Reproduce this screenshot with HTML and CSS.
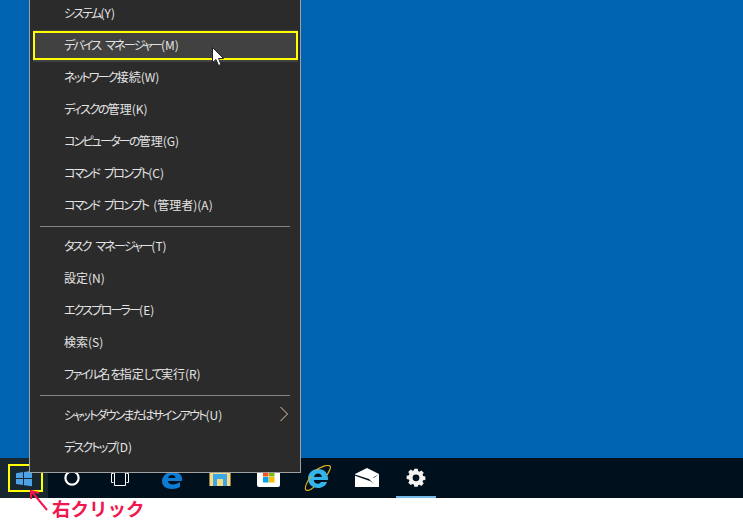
FILE: index.html
```html
<!DOCTYPE html>
<html lang="ja">
<head>
    <meta charset="utf-8">
    <title>デバイス マネージャー</title>
    <link rel="stylesheet" href="styles.css">
</head>
<body>
    <div class="desktop"></div>

    <div class="taskbar">
        <div class="cell start">
            <svg width="18" height="17" viewBox="0 0 18 17"><path fill="#4ba3e6" d="M1 3.200 8 2.100v6H1zM9 2 17 .8v7.300H9zM1 9h7v6.100L1 14zM9 9h8v7.300L9 15.200z"/></svg>
        </div>
        <div class="cell">
            <svg width="18" height="18" viewBox="0 0 18 18"><circle cx="9" cy="9" r="6.600" fill="none" stroke="#fff" stroke-width="2.200"/></svg>
        </div>
        <div class="cell">
            <svg width="22" height="20" viewBox="0 0 22 20"><path fill="none" stroke="#fff" d="M5.500 2.500h11v15h-11zM2.500 5.500v9h2M2.500 5.500h2M19.500 5.500v9h-2M19.500 5.500h-2"/></svg>
        </div>
        <div class="cell edge">
            <svg width="24" height="24" viewBox="0 0 24 24"><path fill="#0f7cd4" d="M12 6C6 6 2 11 2 15c0 5 4 8 10 8 3 0 6-1 8-2v-5c-2 1.500-4.500 2.500-7 2.500-3 0-5-1.500-5-3.500h14c1-6-3-9-10-9zm-4 6c.5-2 2-3 4-3s3.500 1 3.500 3z"/></svg>
        </div>
        <div class="cell">
            <svg width="24" height="20" viewBox="0 0 24 20"><rect x="1" y="0" width="22" height="18" fill="#f9d97f"/><path fill="#8d7a48" d="M1 0h1v18H1zM22 0h1v18h-1z"/><path fill="#3ba7e6" d="M5 18V6h14v12h-4v-7H9v7z"/><rect x="9" y="11" width="6" height="7" fill="#f9d97f"/></svg>
        </div>
        <div class="cell">
            <svg width="24" height="20" viewBox="0 0 24 20"><rect x="1" y="1" width="23" height="18" rx="2" fill="#fff"/><path fill="#f25022" d="M7 3h5.500v5.500H7z"/><path fill="#7fba00" d="M13 3h5.500v5.500H13z"/><path fill="#00a4ef" d="M7 9h5.500v5.500H7z"/><path fill="#ffb900" d="M13 9h5.500v5.500H13z"/></svg>
        </div>
        <div class="cell ie">
            <svg width="28" height="26" viewBox="0 0 28 26"><path fill="#35b4ea" d="M14 4C8 4 4 8.500 4 13.500S8 23 14 23c4.500 0 8-2.500 9-6h-6c-.8 1.200-1.800 1.800-3.200 1.800-2.300 0-3.800-1.500-4-3.800H24c.6-6.500-3.500-11-10-11zm-4 8c.3-2.200 1.900-3.500 4-3.500s3.700 1.300 3.900 3.500z"/><path fill="none" stroke="#d9a91f" stroke-width="1.300" d="M7 11C3 17 0 23 2 25c1.500 1.200 5-.5 8-3M12 5c6-3.500 12-5.500 14-4 1.300 1.300-.5 5-3 9"/></svg>
        </div>
        <div class="cell mail">
            <svg width="24" height="20" viewBox="0 0 24 20"><path fill="#fff" d="M0 6 12 0l12 6v13H0z"/><path fill="#00101c" d="M0 6.500 14 11l5 5-3.500-2.800L0 7.800zM24 6.300 19 9.800l-1-.4z"/></svg>
        </div>
        <div class="cell active">
            <svg width="20" height="20" viewBox="0 0 20 20"><path fill="#f2f2f2" fill-rule="evenodd" d="M8 1h4l.5 2.600 1.500.7 2.300-1.400 2.800 2.800-1.400 2.300.7 1.500 2.600.5v4l-2.600.5-.7 1.500 1.400 2.300-2.800 2.800-2.300-1.400-1.500.7L12 22H8l-.5-2.600-1.500-.7-2.300 1.400-2.800-2.800 1.400-2.300-.7-1.500L-1 13V9l2.600-.5.7-1.500-1.400-2.300 2.800-2.800L6 3.300l1.500-.7zM10 7.500a4 4 0 1 0 0 8 4 4 0 0 0 0-8z" transform="translate(1.500 1) scale(.85)"/></svg>
        </div>
    </div>

    <div class="note">右クリック</div>

    <!-- context menu, grows upward from the taskbar -->
    <div class="menu">
        <div class="item"><span>システム<i>(Y)</i></span></div>
        <div class="item hover"><span>デバイス マネージャー<i>(M)</i></span></div>
        <div class="item"><span>ネットワーク<i>接続(W)</i></span></div>
        <div class="item"><span>ディスクの<i>管理(K)</i></span></div>
        <div class="item"><span>コンピューターの<i>管理(G)</i></span></div>
        <div class="item"><span>コマンド プロンプト<i>(C)</i></span></div>
        <div class="item"><span>コマンド プロンプト <i>(管理者)(A)</i></span></div>
        <div class="sep"></div>
        <div class="item"><span>タスク マネージャー<i>(T)</i></span></div>
        <div class="item"><span><i>設定(N)</i></span></div>
        <div class="item"><span>エクスプローラー<i>(E)</i></span></div>
        <div class="item"><span><i>検索(S)</i></span></div>
        <div class="item"><span>ファイル<i>名</i>を<i>指定</i>して<i>実行(R)</i></span></div>
        <div class="sep"></div>
        <div class="item sub"><span>シャットダウンまたはサインアウト<i>(U)</i></span>
            <svg width="10" height="16" viewBox="0 0 10 16"><path fill="none" stroke="#e6c9a8" d="M1.500 1 8.500 8l-7 7"/></svg>
        </div>
        <div class="item"><span>デスクトップ<i>(D)</i></span></div>
    </div>

    <div class="start-mark"></div>

    <svg class="pointer" width="14" height="20" viewBox="0 0 14 20"><path fill="#fff" stroke="#222" d="M.5.500v15l3.500-3 2.500 6 2.500-1-2.500-6h5z"/></svg>

    <svg class="arrow" width="22" height="24" viewBox="0 0 22 24"><path fill="none" stroke="#f0174f" stroke-width="2" d="M18 21 3 3M2 10 2 2l8 2"/></svg>
</body>
</html>
```
FILE: styles.css
```css
html, body {
    margin: 0;
    height: 520px;
    overflow: hidden;
}
body {
    position: relative;
    display: flex;
    flex-direction: column;
    background: white;
    font-family: "Noto Sans CJK JP", "Noto Sans", sans-serif;
}
.desktop {
    height: 458px;
    flex: none;
    background: #0063b1;
}
.taskbar {
    display: flex;
    flex: none;
    height: 40px;
    background: #00101c;
}
.cell {
    display: flex;
    align-items: center;
    justify-content: center;
    width: 48px;
}
.start {
    background: #17262f;
}
.edge {
    margin-left: 4px;
}
.ie {
    margin-left: 2px;
}
.mail {
    margin-left: 1px;
}
.active {
    box-sizing: border-box;
    width: 40px;
    margin: 0 4px 0 5px;
    border-bottom: 2px solid #76b9ed;
}
.note {
    box-sizing: border-box;
    height: 22px;
    padding: 2px 0 0 52px;
    font-family: "Liberation Sans", "Noto Sans CJK JP", sans-serif;
    font-size: 18.500px;
    font-weight: 700;
    line-height: 20px;
    color: #f0174f;
}

.menu {
    position: absolute;
    z-index: 1;
    left: 29px;
    bottom: 47px;
    box-sizing: border-box;
    width: 272px;
    padding-bottom: 8px;
    border: 1px solid #a0a0a0;
    background: #2b2b2b;
    color: #e4e4e4;
    font-size: 12px;
    font-feature-settings: "palt";
    letter-spacing: -1.800px;
    word-spacing: 4px;
}
/* kanji and the access keys keep their normal spacing */
.menu i {
    font-style: normal;
    letter-spacing: 0;
}
.item {
    position: relative;
    display: flex;
    align-items: center;
    box-sizing: border-box;
    height: 32px;
    padding-bottom: 4px;
    padding-left: 34px;
}
.item.hover {
    margin: 0 2px 0 3px;
    padding-left: 31px;
    background: #414141;
}
.item.hover::after {
    content: "";
    position: absolute;
    inset: 1px 0 2px 0;
    border: 2px solid #ffff00;
}
.sub {
    justify-content: space-between;
    padding-right: 11px;
}
.sep {
    height: 1px;
    margin: 4px 10px;
    background: #858585;
}

.start-mark {
    position: absolute;
    left: 8px;
    top: 464px;
    box-sizing: border-box;
    width: 35px;
    height: 28px;
    border: 2px solid #ffff00;
}
.pointer {
    position: absolute;
    z-index: 2;
    left: 212px;
    top: 47px;
}
.arrow {
    position: absolute;
    left: 29px;
    top: 489px;
}
```
